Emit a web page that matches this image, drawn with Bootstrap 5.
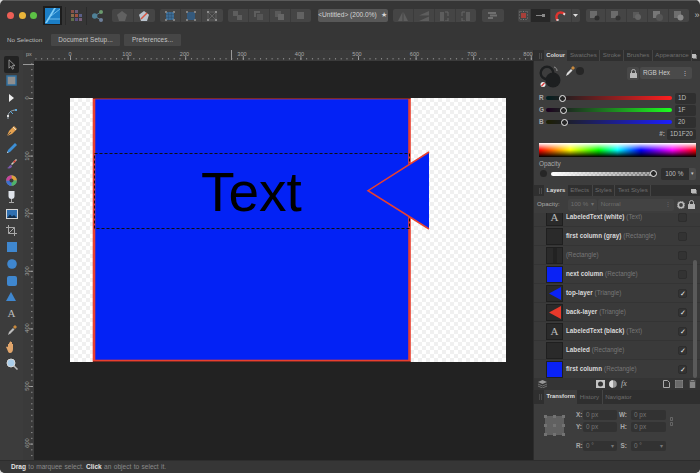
<!DOCTYPE html>
<html lang="en">
<head>
<meta charset="UTF-8">
<title>Affinity Designer</title>
<link href="https://cdn.jsdelivr.net/npm/bootstrap@5.3.3/dist/css/bootstrap.min.css" rel="stylesheet">
<style>
html,body{height:473px;overflow:hidden;background:#d8d8d8}
body{font-family:"Liberation Sans",Arial,sans-serif;font-size:7px;color:#c8c8c8;line-height:1}
svg{display:block;flex:none}
.app{width:700px;height:473px;background:#363636;border-radius:5px;overflow:hidden}
/* top toolbar */
.tbar{height:30px;padding-left:7px;padding-top:1px;box-shadow:inset 0 1px 0 #5a5a5a}
.light{width:7px;height:7px;border-radius:50%;margin-right:4.5px}
.logo{width:19px;height:19px;background:#1d1d1d;margin-left:1.5px}
.vsep{width:1px;height:18px;background:#2b2b2b}
.tgroup{height:13px;background:#454545;border-radius:2px;overflow:hidden}
.tgroup>div{flex:1 1 0;height:100%;border-right:1px solid #3b3b3b}
.tgroup>div:last-child{border-right:0}
#s1{margin-left:3px}#persona{margin-left:4.5px}#s2{margin-left:4.5px}#share{margin-left:4.5px}
#g1{margin-left:9px;width:43px}#g2{margin-left:5px;width:63px}#g3{margin-left:5px;width:83px}
#doc{margin-left:7px;width:70px;background:#585858;color:#d4d4d4;font-size:6.6px;border-radius:2px;height:13px;white-space:nowrap}
#g4{margin-left:5px;width:83px}#g5{margin-left:6px;width:22px}#g6{margin-left:14px;width:62px}
#g7{margin-left:6px;width:103px}#more{margin-left:6px;color:#bbb;font-size:9px}
.tgroup>.on{background:#272727}
.snap{flex:0 0 13px!important}.snapon{flex:0 0 20px!important}.magnet{flex:0 0 21px!important}
/* context bar */
.cbar{height:20px;padding-left:7px;font-size:6.2px;color:#bdbdbd}
.cbtn{height:12px;background:#464646;color:#c4c4c4;font-size:6.4px;border-radius:1px;margin-right:4px;letter-spacing:.1px}
#setup{width:69px;margin-left:9px}#prefs{width:57px}
/* tools + rulers + canvas */
.workarea{height:410px}
.tools{width:23px;background:#3c3c3c}
.tool{height:16.65px}
.tool.on{background:#222;border-radius:2px;width:15px;margin:0 auto}
.corner{width:11px;height:11px;background:#3a3a3a;color:#aaa;font-size:5.5px;padding:2px 0 0 3px}
.hruler{height:11px}
.canvas{width:499px;height:399px;background:#222}
.artboard{position:absolute;left:36px;top:37px}
/* right side */
.side{width:167px;background:#3d3d3d;border-left:1px solid #2c2c2c}
.tabs{background:#2f2f2f;height:11px;color:#6e6e6e;font-size:6.2px;padding-left:5px}
.tabs.tall{height:14px}
.tabs .grip{width:3px;height:6px;border-left:1px solid #4a4a4a;border-right:1px solid #4a4a4a;margin-right:2px}
.ptab{padding:0 2.5px;height:100%;border-right:1px solid #444;display:flex;align-items:center;white-space:nowrap}
.ptab.cur{background:#3d3d3d;color:#ddd;font-weight:700;font-size:5.8px;border:0}
.ptab:last-of-type{border-right:0}
.pmenu{width:5px;height:4px;background:#bbb;margin-left:auto;margin-right:4px;box-shadow:1px 1px 0 #777}
.colour{height:124px;padding:0 4px 0 5px}
.picker{height:31px;padding-top:2px}
.eyedrop{margin:3px 0 0 3px}
.swdot{width:8px;height:8px;border-radius:50%;background:#262626;margin:4px 0 0 1px}
.field{height:11px;background:#2f2f2f;border-radius:2px;color:#bdbdbd;font-size:6.4px;padding-left:3px}
.lockbtn{width:12px;height:13px;background:#484848;border-radius:2px;margin:4px 0 0 43px}
.rgbsel{width:52px;height:12px;background:#4a4a4a;border-radius:2px;margin:4px 0 0 1px;font-size:6.4px;color:#ccc;padding:0 4px 0 3px}
.crow{height:12px}
.crow label{width:7px;color:#aaa;font-size:6.4px;font-weight:700}
.track{position:relative;width:126px;height:4px;border-radius:2px}
.knob{position:absolute;top:-1.5px;width:7px;height:7px;margin-left:-3.5px;border-radius:50%;border:1.4px solid #eee;background:#262626}
.crow .field{width:21px;margin-left:3px}
#tr{background:linear-gradient(to right,#001f20,#ff1f20)}
#tg{background:linear-gradient(to right,#1d0020,#1dff20)}
#tb{background:linear-gradient(to right,#1d1f00,#1d1fff)}
.hexrow{height:12px;color:#aaa;font-size:6.4px;font-weight:700}
.hexrow .field{width:29px;margin-left:2px;font-weight:400}
.spectrum{height:14px;margin-top:3px;background:linear-gradient(to bottom,#fff 0,rgba(255,255,255,0) 50%,rgba(0,0,0,0) 50%,#000 100%),linear-gradient(to right,#f00,#ff0 20%,#0f0 38%,#0ff 50%,#00f 65%,#f0f 85%,#f00)}
.oplabel{margin-top:4px;color:#aaa;font-size:6.4px}
.oprow{height:13px}
.opdot{width:7px;height:7px;border-radius:50%;background:#262626;margin-left:1px}
.optrack{position:relative;width:104px;height:4px;margin-left:4px;border-radius:2px;background:linear-gradient(to right,#fff,rgba(255,255,255,.1)),repeating-conic-gradient(#666 0 25%,#999 0 50%) 0 0/4px 4px}
.opval{width:28px;height:12px;background:#2f2f2f;margin-left:7px;font-size:6.4px;color:#bdbdbd;padding-left:4px;border-radius:2px 0 0 2px}
.opcaret{width:7px;height:12px;background:#4a4a4a;color:#ccc;font-size:5px;border-radius:0 2px 2px 0}
.oprow2{height:17px;padding-left:3px;font-size:6.2px;color:#aaa}
.dimsel{height:12px;background:#434343;color:#6f6f6f;font-size:6.2px;padding:0 3px;border-radius:2px}
#opv{width:29px;margin-left:8px}#blend{width:76px;margin-left:1px}
.rowicon{margin-left:3px}
.layers{height:165px;overflow:hidden;position:relative;padding:0}
.layerlist{margin-top:-5px;border-radius:0;background:transparent}
.lrow{height:19px;background:#3a3a3a;border:0;border-bottom:1px solid #343434;padding:0 13px 0 12px;color:#777;font-size:6.3px;white-space:nowrap;border-radius:0!important}
.lrow b{color:#d9d9d9;margin-right:2px}
.thumb{width:17px;height:17px;border:1px solid #1f1f1f;background:#2a2a2a;margin-right:3px;flex:none}
.thumb.blue{background:#0a22f5}
.tserif{font-family:"Liberation Serif",serif;font-size:11px;color:#bbb}
.fxmark{font-size:8px;font-style:italic;margin-left:4px;width:7px}
.chk{width:9px;height:9px;background:#333;border:1px solid #2d2d2d;border-radius:2px;margin:0 0 0 auto;color:#eee;font-size:7px}
.sbar{position:absolute;right:3px;top:47px;width:4px;height:118px;background:#5a5a5a;border-radius:2px}
.lfoot{height:12px;background:#343434;padding:0 4px}
.ic-mask{margin-left:49px}.ic-doc{margin-left:35px}.ic-grid{margin-left:5px}.ic-bin{margin-left:6px}
.tbody{height:56px;padding:6px 0 0 10px;color:#aaa;font-size:6.4px;font-weight:700}
.anchor{width:21px;height:21px;margin:5px 11px 0 0}
.tgrid{display:grid;grid-template-columns:7px 34px 14px 35px;row-gap:2px;align-items:center}
.tgrid+.tgrid{margin-top:9px}
.tgrid .field{height:10px;font-weight:400;color:#777;background:#323232}
.field.drop{justify-content:space-between;padding-right:3px}
.linkic{margin:7px 0 0 4px}
.spacer{height:6px}
.status{height:13px;background:#363636;padding-left:11px;color:#8a8a8a;font-size:6.6px;border-top:1px solid #2d2d2d;word-spacing:.5px}
.status b{color:#e2e2e2}
</style>
</head>
<body>
<div class="app d-flex flex-column">

  <div class="tbar d-flex align-items-center flex-none">
    <div class="light" style="background:#ec5f56"></div>
    <div class="light" style="background:#e9b53a"></div>
    <div class="light" style="background:#5cc145"></div>
    <div class="logo d-flex align-items-center justify-content-center">
      <svg width="15" height="16" viewBox="0 0 15 16"><rect width="15" height="16" fill="#1b7ec6"/><path d="M0 15 9 0h2L2 15z" fill="#7fcdf7"/><path d="M3 11h12M6 8l9-7" stroke="#8ed3f8" stroke-width=".7" fill="none"/></svg>
    </div>
    <div class="vsep" id="s1"></div>
    <svg id="persona" width="11" height="11" viewBox="0 0 11 11"><g><rect x="0" y="0" width="3" height="3" fill="#8a4f46"/><rect x="4" y="0" width="3" height="3" fill="#6b5a78"/><rect x="0" y="4" width="3" height="3" fill="#8c6b4a"/><rect x="4" y="4" width="3" height="3" fill="#a3503f"/><rect x="8" y="4" width="3" height="3" fill="#5a5f88"/><rect x="0" y="8" width="3" height="3" fill="#5f6d4c"/><rect x="4" y="8" width="3" height="3" fill="#5b4f80"/><rect x="8" y="8" width="3" height="3" fill="#7a5f7a"/></g></svg>
    <div class="vsep" id="s2"></div>
    <svg id="share" width="11" height="12" viewBox="0 0 11 12"><path d="M2.500 6 9 2M2.500 6 9 10" stroke="#5a7f90" stroke-width="1"/><circle cx="2.700" cy="6" r="2.700" fill="#4f8197"/><circle cx="9" cy="2" r="2" fill="#6b9a6e"/><circle cx="9" cy="10" r="2" fill="#6d7f9a"/></svg>

    <div class="tgroup d-flex" id="g1">
      <div class="d-flex align-items-center justify-content-center"><svg width="10" height="10" viewBox="0 0 10 10"><path d="M5 0 10 3.800 8 10H2L0 3.800z" fill="#616161"/></svg></div>
      <div class="d-flex align-items-center justify-content-center"><svg width="10" height="10" viewBox="0 0 10 10"><path d="M5 0 10 3.800 8 10H2L0 3.800z" fill="#b9c3ce"/><path d="M2 8 8 2" stroke="#d9533f" stroke-width="1.500"/></svg></div>
    </div>
    <div class="tgroup d-flex" id="g2">
      <div class="d-flex align-items-center justify-content-center"><svg width="10" height="10" viewBox="0 0 10 10"><rect x="1" y="1" width="8" height="8" fill="#3f6f98"/><path d="M3.600 1v8M6.300 1v8M1 3.600h8M1 6.300h8" stroke="#2d4c68" stroke-width=".5"/><path d="M0 0h2v2H0zM8 0h2v2H8zM0 8h2v2H0zM8 8h2v2H8z" fill="#808080"/></svg></div>
      <div class="d-flex align-items-center justify-content-center"><svg width="10" height="10" viewBox="0 0 10 10"><rect x="1" y="1" width="8" height="8" fill="#34597c"/><path d="M0 0h2v2H0zM8 0h2v2H8zM0 8h2v2H0zM8 8h2v2H8z" fill="#808080"/></svg></div>
      <div class="d-flex align-items-center justify-content-center"><svg width="10" height="10" viewBox="0 0 10 10"><path d="M1 1 9 9M9 1 1 9" stroke="#6a6a6a" stroke-width=".8"/><rect x="1" y="1" width="8" height="8" fill="none" stroke="#6a6a6a" stroke-width=".7"/><path d="M0 0h2v2H0zM8 0h2v2H8zM0 8h2v2H0zM8 8h2v2H8z" fill="#8c8c8c"/></svg></div>
    </div>
    <div class="tgroup d-flex" id="g3">
      <div class="d-flex align-items-center justify-content-center"><svg width="9" height="9" viewBox="0 0 9 9"><rect x="0" y="0" width="5" height="5" fill="#5e5e5e"/><rect x="4" y="4" width="5" height="5" fill="#5e5e5e"/></svg></div>
      <div class="d-flex align-items-center justify-content-center"><svg width="9" height="9" viewBox="0 0 9 9"><path d="M0 0h6v2H2v4H0z" fill="#5e5e5e"/><rect x="3" y="3" width="6" height="6" fill="#565656"/></svg></div>
      <div class="d-flex align-items-center justify-content-center"><svg width="9" height="9" viewBox="0 0 9 9"><path d="M0 0h6v3H3v3H0z" fill="#5a5a5a"/><rect x="3" y="3" width="6" height="6" fill="#666"/></svg></div>
      <div class="d-flex align-items-center justify-content-center"><svg width="9" height="9" viewBox="0 0 9 9"><rect x="1" y="1" width="7" height="7" fill="#626262"/></svg></div>
    </div>
    <div id="doc" class="d-flex align-items-center justify-content-center">&lt;Untitled&gt; (200.0%) <span class="ms-1">★</span></div>
    <div class="tgroup d-flex" id="g4">
      <div class="d-flex align-items-center justify-content-center"><svg width="10" height="10" viewBox="0 0 10 10"><path d="M4.500 1v9H0zM5.500 1v9H10z" fill="#5d5d5d"/></svg></div>
      <div class="d-flex align-items-center justify-content-center"><svg width="10" height="10" viewBox="0 0 10 10"><path d="M10 0v4.500H0zM10 5.500V10H0z" fill="#5d5d5d"/></svg></div>
      <div class="d-flex align-items-center justify-content-center"><svg width="9" height="10" viewBox="0 0 9 10"><rect x="0" y="1" width="4" height="9" fill="#5d5d5d"/><path d="M5 1h3v4M5 10h3V7" stroke="#666" fill="none"/></svg></div>
      <div class="d-flex align-items-center justify-content-center"><svg width="9" height="10" viewBox="0 0 9 10"><rect x="5" y="1" width="4" height="9" fill="#5d5d5d"/><path d="M4 1H1v4M4 10H1V7" stroke="#666" fill="none"/></svg></div>
    </div>
    <div class="tgroup d-flex" id="g5">
      <div class="d-flex align-items-center justify-content-center"><svg width="9" height="7" viewBox="0 0 9 7"><path d="M0 0h8v2H0zM0 5h5v2H0zM2 2.500h7v2H2z" fill="#6f6f6f"/></svg></div>
    </div>
    <div class="tgroup d-flex" id="g6">
      <div class="snap d-flex align-items-center justify-content-center"><svg width="9" height="9" viewBox="0 0 9 9"><rect x="2" y="2" width="5" height="5" fill="#a8403a"/><path d="M0 1h1M0 4h1M0 7h1M8 1h1M8 4h1M8 7h1M2 0v1M4.500 0v1M7 0v1M2 8v1M4.500 8v1M7 8v1" stroke="#8a8a8a" stroke-width=".8"/></svg></div>
      <div class="snapon on d-flex align-items-center justify-content-center"><svg width="9" height="5" viewBox="0 0 9 5"><path d="M0 2.500h6" stroke="#888"/><rect x="6" y="1" width="3" height="3" fill="#8a8a8a"/></svg></div>
      <div class="magnet d-flex align-items-center justify-content-center"><svg width="11" height="10" viewBox="0 0 11 10"><path d="M2.500 9.500C.5 6 1.500 2.500 4.500 1.700 6.500 1.200 8 1.800 9.800 3.200" fill="none" stroke="#e0332e" stroke-width="2.400"/><path d="M4.800 8.500C3.800 6.500 4.300 5 5.500 4.600 6.300 4.400 7 4.800 8 5.500" fill="none" stroke="#454545" stroke-width=".6"/><path d="M1 8.500l2.400-.5.5 1.500-2 .5zM8.800 1.500l1.700 1.300-1 1.600-1.500-1.100z" fill="#ddd"/></svg></div>
      <div class="d-flex align-items-center justify-content-center"><svg width="5" height="3" viewBox="0 0 5 3"><path d="M0 0h5L2.500 3z" fill="#ddd"/></svg></div>
    </div>
    <div class="tgroup d-flex" id="g7">
      <div class="d-flex align-items-center justify-content-center"><svg width="10" height="10" viewBox="0 0 10 10"><rect x="0" y="0" width="7" height="7" fill="#6b6b6b"/><circle cx="7" cy="7" r="2.500" fill="#2e2e2e"/></svg></div>
      <div class="d-flex align-items-center justify-content-center"><svg width="10" height="10" viewBox="0 0 10 10"><rect x="0" y="0" width="7" height="7" fill="#6b6b6b"/><circle cx="7" cy="7" r="2.500" fill="#333"/></svg></div>
      <div class="d-flex align-items-center justify-content-center"><svg width="10" height="10" viewBox="0 0 10 10"><rect x="1" y="1" width="6" height="6" fill="#5a5a5a"/><circle cx="6" cy="6" r="3" fill="#666"/></svg></div>
      <div class="d-flex align-items-center justify-content-center"><svg width="10" height="10" viewBox="0 0 10 10"><rect x="0" y="0" width="7" height="7" fill="#777"/><circle cx="6.500" cy="6.500" r="3.500" fill="#555"/></svg></div>
      <div class="d-flex align-items-center justify-content-center"><svg width="10" height="10" viewBox="0 0 10 10"><rect x="0" y="0" width="7" height="7" fill="#6e6e6e"/><circle cx="6.500" cy="6.500" r="3" fill="#8a8a8a"/></svg></div>
    </div>
    <div id="more">»</div>
  </div>

  <div class="cbar d-flex align-items-center">
    <span>No Selection</span>
    <button type="button" id="setup" class="btn cbtn p-0 border-0">Document Setup...</button>
    <button type="button" id="prefs" class="btn cbtn p-0 border-0">Preferences...</button>
  </div>

  <div class="workarea d-flex">
    <div class="tools flex-shrink-0">
      <div class="spacer"></div>
      <div class="tool on d-flex align-items-center justify-content-center"><svg width="8" height="11" viewBox="0 0 8 11"><path d="M1 .8v8.400l2-2 1.400 3 1.300-.6-1.300-3H7z" fill="none" stroke="#aaa" stroke-width=".8"/></svg></div>
      <div class="tool d-flex align-items-center justify-content-center"><svg width="11" height="11" viewBox="0 0 11 11"><rect x="1" y="1" width="9" height="9" fill="#8f8f8f" stroke="#2f6f9f" stroke-width="1.500"/></svg></div>
      <div class="tool d-flex align-items-center justify-content-center"><svg width="7" height="8" viewBox="0 0 7 8"><path d="M1 0v8l5-4z" fill="#eee"/></svg></div>
      <div class="tool d-flex align-items-center justify-content-center"><svg width="12" height="12" viewBox="0 0 12 12"><path d="M2 11V8C2 5 5 2 10 2" fill="none" stroke="#9aa8b2"/><rect x="1" y="7" width="2" height="2" fill="#ddd"/><rect x="9" y="1" width="2" height="2" fill="#5fa8d8"/><path d="M4 3 7 6" stroke="#5fa8d8"/></svg></div>
      <div class="tool d-flex align-items-center justify-content-center"><svg width="12" height="12" viewBox="0 0 12 12"><path d="M1 11 3 6 8 1l3 3-5 5z" fill="#e3a04f"/><path d="M1 11 5 7" stroke="#444" stroke-width=".7"/><path d="M7 2l3 3" stroke="#e8e0d0"/></svg></div>
      <div class="tool d-flex align-items-center justify-content-center"><svg width="12" height="12" viewBox="0 0 12 12"><path d="M1 11 2 8 9 1l2 2-7 7z" fill="#3d8fd6"/><path d="M1 11l1.500-.5L1.500 9.500z" fill="#eee"/></svg></div>
      <div class="tool d-flex align-items-center justify-content-center"><svg width="12" height="12" viewBox="0 0 12 12"><path d="M5 6 10 1l1 1-5 5z" fill="#d9d3c5"/><path d="M7 4l2-2 1 1-2 2z" fill="#d5392e"/><path d="M1 10C3 10 3 7 5 7l1 1c0 2-3 3-5 2z" fill="#7c5cb0"/></svg></div>
      <div class="tool d-flex align-items-center justify-content-center"><svg width="11" height="11" viewBox="0 0 11 11"><circle cx="5.500" cy="5.500" r="5.300" fill="#888"/><path d="M5.500 5.500V.2A5.300 5.300 0 0 1 10.800 5.500z" fill="#e0a13a"/><path d="M5.500 5.500H10.800A5.300 5.300 0 0 1 5.500 10.800z" fill="#4db36a"/><path d="M5.500 5.500V10.800A5.300 5.300 0 0 1 .2 5.500z" fill="#3c6fd0"/><path d="M5.500 5.500H.2A5.300 5.300 0 0 1 5.500 .2z" fill="#c7449a"/><circle cx="5.500" cy="5.500" r="2" fill="#3c3c3c"/></svg></div>
      <div class="tool d-flex align-items-center justify-content-center"><svg width="7" height="12" viewBox="0 0 7 12"><path d="M.5 0h6v5a3 3 0 0 1-6 0z" fill="#dfe3ea"/><path d="M3.500 8v3M1 11.500h5" stroke="#aaa"/></svg></div>
      <div class="tool d-flex align-items-center justify-content-center"><svg width="12" height="10" viewBox="0 0 12 10"><rect width="12" height="10" fill="#d6d6d6"/><rect x="1" y="1" width="10" height="8" fill="#2f6fb0"/><path d="M1 9 4 5.500l2 2 2-1.500 3 3z" fill="#122d4a"/></svg></div>
      <div class="tool d-flex align-items-center justify-content-center"><svg width="11" height="11" viewBox="0 0 11 11"><path d="M2.500 0v8.500H11M0 2.500h8.500V11M8.500 2.500 2.500 8.500" fill="none" stroke="#a8a8a8"/></svg></div>
      <div class="tool d-flex align-items-center justify-content-center"><svg width="10" height="10" viewBox="0 0 10 10"><rect width="10" height="10" fill="#3f87cf"/></svg></div>
      <div class="tool d-flex align-items-center justify-content-center"><svg width="10" height="10" viewBox="0 0 10 10"><circle cx="5" cy="5" r="4.800" fill="#3f87cf"/></svg></div>
      <div class="tool d-flex align-items-center justify-content-center"><svg width="10" height="10" viewBox="0 0 10 10"><rect width="10" height="10" rx="2" fill="#3f87cf"/></svg></div>
      <div class="tool d-flex align-items-center justify-content-center"><svg width="11" height="10" viewBox="0 0 11 10"><path d="M5 0 10 9H0z" fill="#3f87cf"/></svg></div>
      <div class="tool d-flex align-items-center justify-content-center tserif">A</div>
      <div class="tool d-flex align-items-center justify-content-center"><svg width="10" height="11" viewBox="0 0 10 11"><path d="M1 10 2 7 6 3l1.500 1.500-4 4z" fill="#bbb"/><path d="M6 2l2-2 2 2-2 2z" fill="#c9893c"/></svg></div>
      <div class="tool d-flex align-items-center justify-content-center"><svg width="11" height="12" viewBox="0 0 11 12"><path d="M2 6V3l1 0v2V1.500h1V5V.5h1V5V1h1v4.500V3h1v5c0 2-1 4-3 4S2 10 1 8L0 6l1-.5z" fill="#e0a56b"/></svg></div>
      <div class="tool d-flex align-items-center justify-content-center"><svg width="12" height="12" viewBox="0 0 12 12"><circle cx="5" cy="5" r="4" fill="#a9cdea" stroke="#d8d8d8"/><path d="M8 8l3.500 3.500" stroke="#bbb" stroke-width="1.500"/></svg></div>
    </div>

    <div class="d-flex flex-column">
      <div class="d-flex hruler">
        <div class="corner">px</div>
        <svg width="499" height="11" viewBox="0 0 499 11">
          <defs>
            <pattern id="hticks" x="36" y="0" width="5.76" height="11" patternUnits="userSpaceOnUse"><rect x="0" y="8" width="1" height="1.500" fill="#888"/></pattern>
            <pattern id="hmajor" x="36" y="0" width="57.6" height="11" patternUnits="userSpaceOnUse"><rect x="0" y="6" width=".8" height="4" fill="#aaa"/></pattern>
          </defs>
          <rect width="499" height="11" fill="#3a3a3a"/>
          <rect width="499" height="11" fill="url(#hticks)"/>
          <rect x="36" width="463" height="11" fill="url(#hmajor)"/>
          <rect x="197" y="0" width="1" height="10" fill="#999"/>
          <g fill="#a8a8a8" font-size="5.6" text-anchor="middle" font-family="Liberation Sans, sans-serif">
            <text x="36" y="5.500">0</text><text x="93" y="5.500">100</text><text x="150.500" y="5.500">200</text><text x="208" y="5.500">300</text><text x="265.500" y="5.500">400</text><text x="323" y="5.500">500</text><text x="380.500" y="5.500">600</text><text x="438" y="5.500">700</text><text x="494" y="5.500">800</text>
          </g>
        </svg>
      </div>
      <div class="d-flex">
        <svg width="11" height="399" viewBox="0 0 11 399">
          <defs>
            <pattern id="vticks" x="0" y="37" width="11" height="5.76" patternUnits="userSpaceOnUse"><rect x="8" y="0" width="1.500" height="1" fill="#888"/></pattern>
            <pattern id="vmajor" x="0" y="37" width="11" height="57.6" patternUnits="userSpaceOnUse"><rect x="6" y="0" width="4" height=".8" fill="#aaa"/></pattern>
          </defs>
          <rect width="11" height="399" fill="#3a3a3a"/>
          <rect width="11" height="399" fill="url(#vticks)"/>
          <rect y="37" width="11" height="362" fill="url(#vmajor)"/>
          <rect x="0" y="3" width="11" height="1" fill="#999"/>
          <g fill="#a8a8a8" font-size="5.600" text-anchor="middle" font-family="Liberation Sans, sans-serif">
            <text transform="translate(5.500 37) rotate(-90)">0</text><text transform="translate(5.500 95) rotate(-90)">100</text><text transform="translate(5.500 152) rotate(-90)">200</text><text transform="translate(5.500 210) rotate(-90)">300</text><text transform="translate(5.500 267) rotate(-90)">400</text><text transform="translate(5.500 325) rotate(-90)">500</text><text transform="translate(5.500 382) rotate(-90)">600</text>
          </g>
        </svg>
        <div class="canvas position-relative">
          <svg class="artboard" width="436" height="264" viewBox="0 0 436 264">
            <defs>
              <pattern id="chk" width="8" height="8" patternUnits="userSpaceOnUse"><rect width="8" height="8" fill="#fff"/><rect width="4" height="4" fill="#f0f0f0"/><rect x="4" y="4" width="4" height="4" fill="#f0f0f0"/></pattern>
            </defs>
            <rect width="436" height="264" fill="url(#chk)"/>
            <rect x="24" y="0" width="315.500" height="263" fill="#0322f5" stroke="#e8402f" stroke-width="2.600"/>
            <path d="M23 .5H340.500M23 263.500H340.500" stroke="#7d2a24"/>
            <text x="131" y="113" font-size="55" fill="#000" font-family="Liberation Sans, Arial, sans-serif">Text</text>
            <path d="M24.500 55.500H339.500V130.500H24.500Z" fill="none" stroke="#111" stroke-dasharray="3 2"/>
            <path d="M359 54 298 92.700 359 131z" fill="#0322f5"/>
            <path d="M359 54 298 92.700 359 131" fill="none" stroke="#e8402f" stroke-width="1.500"/>
          </svg>
        </div>
      </div>
    </div>

    <div class="side flex-shrink-0">
      <div class="tabs d-flex align-items-center">
        <div class="grip"></div>
        <div class="ptab cur">Colour</div><div class="ptab">Swatches</div><div class="ptab">Stroke</div><div class="ptab">Brushes</div><div class="ptab">Appearance</div>
        <div class="pmenu"></div>
      </div>
      <div class="colour">
        <div class="picker d-flex">
          <svg width="24" height="27" viewBox="0 0 24 27"><circle cx="8" cy="10" r="6.300" fill="none" stroke="#1d1f20" stroke-width="2.400"/><circle cx="14" cy="17" r="7.500" fill="#1d1f20"/><path d="M15 4c2 .5 3 2 3 4" fill="none" stroke="#aaa" stroke-width=".8"/><circle cx="4" cy="21.500" r="2.500" fill="#eee"/><path d="M2.500 23l3-3" stroke="#d33" stroke-width="1.200"/></svg>
          <svg class="eyedrop" width="9" height="10" viewBox="0 0 9 10"><path d="M0 10 1 7 5 3l1.500 1.500-4 4z" fill="#ddd"/><path d="M5 2l2-2 2 2-2 2z" fill="#c9893c"/></svg>
          <div class="swdot"></div>
          <div class="lockbtn d-flex align-items-center justify-content-center"><svg width="7" height="9" viewBox="0 0 7 9"><path d="M1.500 4V2.500a2 2 0 0 1 4 0V4" fill="none" stroke="#bbb"/><rect y="4" width="7" height="5" rx=".5" fill="#bbb"/></svg></div>
          <div class="rgbsel d-flex align-items-center justify-content-between">RGB Hex<span>⋮</span></div>
        </div>
        <div class="crow d-flex align-items-center"><label>R</label><div class="track" id="tr"><div class="knob" style="left:13%"></div></div><div class="field d-flex align-items-center">1D</div></div>
        <div class="crow d-flex align-items-center"><label>G</label><div class="track" id="tg"><div class="knob" style="left:14%"></div></div><div class="field d-flex align-items-center">1F</div></div>
        <div class="crow d-flex align-items-center"><label>B</label><div class="track" id="tb"><div class="knob" style="left:14.500%"></div></div><div class="field d-flex align-items-center">20</div></div>
        <div class="hexrow d-flex align-items-center justify-content-end">#:<div class="field d-flex align-items-center">1D1F20</div></div>
        <div class="spectrum"></div>
        <div class="oplabel">Opacity</div>
        <div class="oprow d-flex align-items-center">
          <div class="opdot"></div>
          <div class="optrack"><div class="knob" style="left:99%"></div></div>
          <div class="opval d-flex align-items-center">100 %</div>
          <div class="opcaret d-flex align-items-center justify-content-center">▾</div>
        </div>
      </div>

      <div class="tabs d-flex align-items-center">
        <div class="grip"></div>
        <div class="ptab cur">Layers</div><div class="ptab">Effects</div><div class="ptab">Styles</div><div class="ptab">Text Styles</div>
        <div class="pmenu"></div>
      </div>
      <div class="oprow2 d-flex align-items-center">
        <span>Opacity:</span>
        <div class="dimsel d-flex align-items-center justify-content-between" id="opv">100 % <span>▾</span></div>
        <div class="dimsel d-flex align-items-center justify-content-between" id="blend">Normal <span>⋮</span></div>
        <svg class="rowicon" width="8" height="8" viewBox="0 0 8 8"><circle cx="4" cy="4" r="2.700" fill="none" stroke="#bbb" stroke-width="1.600"/><circle cx="4" cy="4" r="3.900" fill="none" stroke="#bbb" stroke-width=".8" stroke-dasharray="1.200 1.200"/></svg>
        <svg class="rowicon" width="7" height="9" viewBox="0 0 7 9"><path d="M1.500 4V2.500a2 2 0 0 1 4 0V4" fill="none" stroke="#bbb"/><rect y="4" width="7" height="5" rx=".5" fill="#bbb"/></svg>
      </div>
      <div class="layers">
        <ul class="list-group list-group-flush layerlist">
          <li class="list-group-item lrow d-flex align-items-center"><div class="thumb tserif d-flex align-items-center justify-content-center">A</div><b>LabeledText (white)</b> (Text)<div class="chk d-flex align-items-center justify-content-center"></div></li>
          <li class="list-group-item lrow d-flex align-items-center"><div class="thumb"></div><b>first column (gray)</b> (Rectangle)<div class="chk d-flex align-items-center justify-content-center"></div></li>
          <li class="list-group-item lrow d-flex align-items-center"><div class="thumb d-flex justify-content-center"><svg width="4" height="15" viewBox="0 0 4 15"><rect width="4" height="15" fill="#222"/></svg></div>(Rectangle)<div class="chk d-flex align-items-center justify-content-center"></div></li>
          <li class="list-group-item lrow d-flex align-items-center"><div class="thumb blue"></div><b>next column</b> (Rectangle)<div class="chk d-flex align-items-center justify-content-center"></div></li>
          <li class="list-group-item lrow d-flex align-items-center"><div class="thumb"><svg width="15" height="15" viewBox="0 0 15 15"><path d="M14 1 2 7.500 14 14z" fill="#0a22f5"/></svg></div><b>top-layer</b> (Triangle)<div class="chk d-flex align-items-center justify-content-center">✓</div></li>
          <li class="list-group-item lrow d-flex align-items-center"><div class="thumb"><svg width="15" height="15" viewBox="0 0 15 15"><path d="M14 1 2 7.500 14 14z" fill="#e8392b"/></svg></div><b>back-layer</b> (Triangle)<div class="chk d-flex align-items-center justify-content-center">✓</div></li>
          <li class="list-group-item lrow d-flex align-items-center"><div class="thumb tserif d-flex align-items-center justify-content-center">A</div><b>LabeledText (black)</b> (Text)<div class="chk d-flex align-items-center justify-content-center">✓</div></li>
          <li class="list-group-item lrow d-flex align-items-center"><div class="thumb"></div><b>Labeled</b> (Rectangle)<div class="chk d-flex align-items-center justify-content-center">✓</div></li>
          <li class="list-group-item lrow d-flex align-items-center"><div class="thumb blue"></div><b>first column</b> (Rectangle)<div class="chk d-flex align-items-center justify-content-center">✓</div></li>
        </ul>
        <div class="sbar"></div>
      </div>
      <div class="lfoot d-flex align-items-center">
        <svg width="9" height="8" viewBox="0 0 9 8"><path d="M4.500 0 9 2 4.500 4 0 2z" fill="#999"/><path d="M0 4l4.500 2L9 4M0 6l4.500 2L9 6" fill="none" stroke="#888" stroke-width=".7"/></svg>
        <svg class="ic-mask" width="9" height="8" viewBox="0 0 9 8"><rect width="9" height="8" fill="#c4c4c4"/><circle cx="4.500" cy="4" r="2.500" fill="#333"/></svg>
        <svg class="ms-1" width="8" height="8" viewBox="0 0 8 8"><circle cx="4" cy="4" r="3.800" fill="#999"/><path d="M4 .2A3.800 3.800 0 0 0 4 7.800z" fill="#ddd"/></svg>
        <span class="tserif fxmark">fx</span>
        <svg class="ic-doc" width="7" height="8" viewBox="0 0 7 8"><path d="M.5.500h4l2 2v5h-6z" fill="none" stroke="#aaa"/></svg>
        <svg class="ic-grid" width="8" height="8" viewBox="0 0 8 8"><rect width="8" height="8" fill="#888"/><path d="M2 0v8M4 0v8M6 0v8M0 2h8M0 4h8M0 6h8" stroke="#444" stroke-width=".5"/></svg>
        <svg class="ic-bin" width="7" height="8" viewBox="0 0 7 8"><path d="M0 1h7M2 1V0h3v1M1 2h5v6H1z" fill="#888" stroke="#888" stroke-width=".5"/></svg>
      </div>

      <div class="tabs tall d-flex align-items-center">
        <div class="grip"></div>
        <div class="ptab cur">Transform</div><div class="ptab">History</div><div class="ptab">Navigator</div>
      </div>
      <div class="tbody d-flex">
        <svg class="anchor" viewBox="0 0 21 21"><rect x="1" y="1" width="19" height="19" fill="#616161"/><g fill="#737373"><rect width="3" height="3"/><rect x="9" width="3" height="3"/><rect x="18" width="3" height="3"/><rect y="9" width="3" height="3"/><rect x="9" y="9" width="3" height="3"/><rect x="18" y="9" width="3" height="3"/><rect y="18" width="3" height="3"/><rect x="9" y="18" width="3" height="3"/><rect x="18" y="18" width="3" height="3"/></g></svg>
        <div>
          <div class="tgrid">
            <span>X:</span><div class="field d-flex align-items-center">0 px</div><span class="text-end pe-1">W:</span><div class="field d-flex align-items-center">0 px</div>
            <span>Y:</span><div class="field d-flex align-items-center">0 px</div><span class="text-end pe-1">H:</span><div class="field d-flex align-items-center">0 px</div>
          </div>
          <div class="tgrid">
            <span>R:</span><div class="field drop d-flex align-items-center">0 ° <span>▾</span></div><span class="text-end pe-1">S:</span><div class="field drop d-flex align-items-center">0 ° <span>▾</span></div>
          </div>
        </div>
        <svg class="linkic" width="3" height="9" viewBox="0 0 3 9"><path d="M.5.500h2v3h-2zM.5 5.500h2v3h-2z" fill="none" stroke="#777" stroke-width=".7"/></svg>
      </div>
    </div>
  </div>

  <div class="status d-flex align-items-center"><span><b>Drag</b> to marquee select. <b>Click</b> an object to select it.</span></div>
</div>
</body>
</html>
